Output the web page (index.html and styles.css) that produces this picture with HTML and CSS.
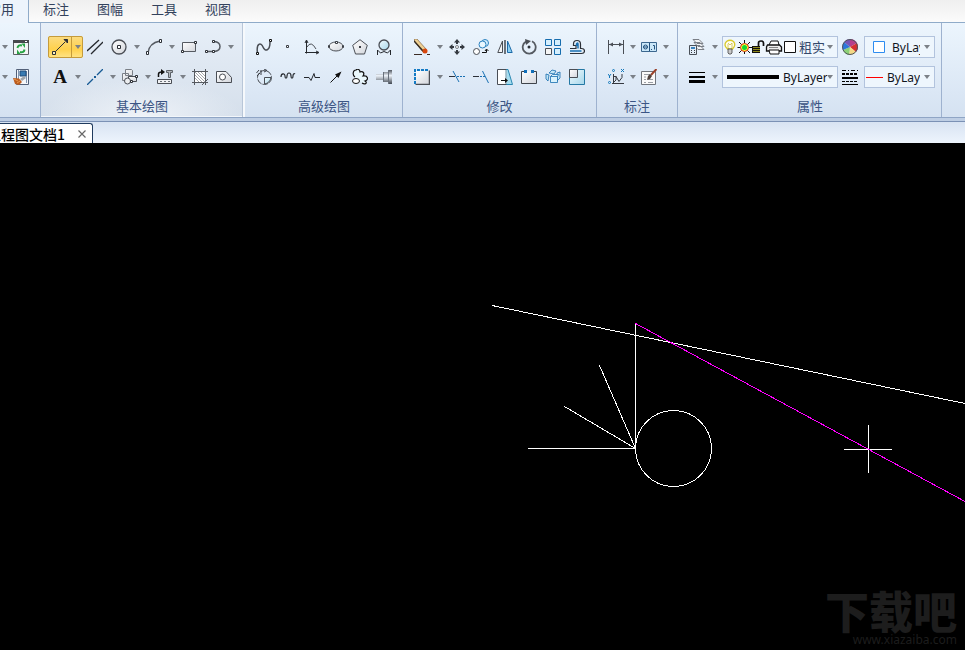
FILE: index.html
```html
<!DOCTYPE html>
<html lang="zh-CN">
<head>
<meta charset="utf-8">
<title>工程图文档1</title>
<link rel="stylesheet" href="styles.css">
</head>
<body>
<svg class="defs" aria-hidden="true">
  <defs>
    <symbol id="arrow" viewBox="0 0 6 4"><path d="M0 0h6L3 4z" fill="#7b8087"/></symbol>
    <linearGradient id="face" x1="0" y1="0" x2="1" y2="1"><stop offset="0" stop-color="#fff"/><stop offset="1" stop-color="#d3d6dc"/></linearGradient>
    <linearGradient id="ice" x1="0" y1="0" x2="1" y2="1"><stop offset="0" stop-color="#f4fcff"/><stop offset="1" stop-color="#a5d6ea"/></linearGradient>
    <linearGradient id="steel" x1="0" y1="0" x2="0" y2="1"><stop offset="0" stop-color="#50565f"/><stop offset=".4" stop-color="#edf3fa"/><stop offset="1" stop-color="#3f4650"/></linearGradient>
  </defs>
</svg>
<nav class="menu">
  <a class="menu-item active" href="#">常用</a>
  <a class="menu-item" href="#">标注</a>
  <a class="menu-item" href="#">图幅</a>
  <a class="menu-item" href="#">工具</a>
  <a class="menu-item" href="#">视图</a>
</nav>
<main class="ribbon">
  <section class="group">
    <div class="row">
      <button class="drop small" aria-label="更多"><svg><use href="#arrow"/></svg></button>
      <button class="tool" aria-label="刷新"><svg viewBox="0 0 16 16"><path d="M.5 1.500h15v14H.5z" fill="#f4f5f6" stroke="#5d6065"/><path d="M0 1h16v3H0z" fill="#47494d"/><path d="M12 2h2v1h-2z" fill="#fff"/><path d="M4.500 9Q5 5.500 9 6.500M11.500 10.500Q11 14 7 13" fill="none" stroke="#27a343" stroke-width="2"/><path d="M8.500 4.500h3.500v4.500zM4 10.500v4.500h3.500z" fill="#2aa347"/></svg></button>
    </div>
    <div class="row">
      <button class="drop small" aria-label="更多"><svg><use href="#arrow"/></svg></button>
      <button class="tool" aria-label="特性刷"><svg viewBox="0 0 16 16"><path d="M3.500.5h12v15h-12z" fill="#f5f7fa" stroke="#526078"/><path d="M5 1h1v13H5zM13 2h1v12h-1z" fill="#8195b1"/><path d="M7 2h6v5H7z" fill="#387bb2" stroke="#234d78"/><path d="M11 7L7 10l2 2 4-3z" fill="#9fa5ab"/><path d="M0 9l6 .5 3 3.500-3 3-4-1z" fill="#bd5d1e"/><path d="M1 10l4 2M4 14l3-2" stroke="#e89a50"/></svg></button>
    </div>
  </section>

  <section class="group lit">
    <div class="row">
      <span class="split">
        <button class="tool" aria-label="直线"><svg viewBox="0 0 16 16"><path d="M2 14L13 3" stroke="#2c3037"/><path d="M12 .5h3.500V4z" fill="#2c3037" stroke="#2c3037"/><path d="M.5 12.500h3v3h-3z" fill="#fff2b8" stroke="#2c3037"/></svg></button>
        <button class="drop" aria-label="直线选项"><svg><use href="#arrow"/></svg></button>
      </span>
      <button class="tool" aria-label="平行线"><svg viewBox="0 0 16 16"><path d="M0 12L12 1M4 15L16 3" stroke="#25282d" stroke-width="1.300"/></svg></button>
      <button class="tool" aria-label="圆"><svg viewBox="0 0 16 16"><circle cx="8" cy="8" r="7" fill="url(#face)" stroke="#4a4e55" stroke-width="1.300"/><path d="M6.500 6.500h3v3h-3z" fill="#fff" stroke="#2c3037"/></svg></button>
      <button class="drop" aria-label="圆选项"><svg><use href="#arrow"/></svg></button>
      <button class="tool" aria-label="圆弧"><svg viewBox="0 0 16 16"><path d="M2 14Q3 4 14 2" fill="none" stroke="#555a61" stroke-width="1.500"/><path d="M.5 12.500h2v3h-2zM13.500.5h2v3h-2z" fill="#fff" stroke="#2c3037"/></svg></button>
      <button class="drop" aria-label="圆弧选项"><svg><use href="#arrow"/></svg></button>
      <button class="tool" aria-label="矩形"><svg viewBox="0 0 16 16"><path d="M1.500 3.500h13v9h-13z" fill="url(#face)" stroke="#555a61"/><path d="M.5 11.500h2v2h-2zM13.500 2.500h2v2h-2z" fill="#fff" stroke="#2c3037"/></svg></button>
      <button class="tool" aria-label="多段线"><svg viewBox="0 0 16 16"><path d="M2 12.500h7q6-.5 6-5t-6-5" fill="none" stroke="#555a61" stroke-width="1.500"/><path d="M.5 11.500h2v2h-2zM7.500 11.500h2v2h-2zM7.500 1.500h2v2h-2z" fill="#fff" stroke="#2c3037"/></svg></button>
      <button class="drop" aria-label="多段线选项"><svg><use href="#arrow"/></svg></button>
    </div>
    <div class="row">
      <button class="tool letter" aria-label="文字">A</button>
      <button class="drop" aria-label="文字选项"><svg><use href="#arrow"/></svg></button>
      <button class="tool" aria-label="中心线"><svg viewBox="0 0 16 16"><path d="M0 16L6 10M10 6L16 0" stroke="#175a94" stroke-width="1.300"/><path d="M7 7h2v2H7z" fill="#175a94"/></svg></button>
      <button class="drop" aria-label="中心线选项"><svg><use href="#arrow"/></svg></button>
      <button class="tool" aria-label="块"><svg viewBox="0 0 16 16"><path d="M3.500.5h6l1 1v5h-7zM.5 4.500h6v7h-6z" fill="url(#face)" stroke="#7a7f86"/><path d="M6.500 7.500h8v5h-8z" fill="url(#face)" stroke="#4a4e55"/><circle cx="5.500" cy="12" r="3" fill="#eceef0" stroke="#4a4e55"/><path d="M13.500 6.500h2v2h-2zM8.500 11.500h2v2h-2z" fill="#fff" stroke="#2c3037"/></svg></button>
      <button class="drop" aria-label="块选项"><svg><use href="#arrow"/></svg></button>
      <button class="tool" aria-label="图库"><svg viewBox="0 0 16 16"><path d="M1.500 8V5Q1.500 3 5 3" fill="none" stroke="#111" stroke-width="1.500"/><path d="M4 0l4 3-4 3z" fill="#111"/><path d="M9.500 1.500h6v2h-2v5h-2v-5h-2z" fill="#b4b8bd" stroke="#5d6268"/><path d="M.5 10.500h14v4H.5z" fill="#f0f1f3" stroke="#4a4e55"/><path d="M3 12h2v1H3zM7 12h2v1H7zM11 12h2v1h-2z" fill="#6c7178"/></svg></button>
      <button class="drop" aria-label="图库选项"><svg><use href="#arrow"/></svg></button>
      <button class="tool" aria-label="剖面线"><svg viewBox="0 0 16 16"><path d="M3 3h10v10H3z" fill="#fff"/><path d="M3 3l10 10M3 6l7 7M3 9l4 4M6 3l7 7M9 3l4 4" stroke="#8b9097" stroke-width=".8"/><path d="M2.500 0v16M13.500 0v16M0 2.500h16M0 13.500h16M10 16l6-6" fill="none" stroke="#55595f"/></svg></button>
      <button class="tool" aria-label="填充"><svg viewBox="0 0 16 16"><path d="M.5 2.500H10l5.500 6v5H.5z" fill="url(#face)" stroke="#4a4e55"/><circle cx="6.500" cy="8" r="3" fill="#fff" stroke="#4a4e55"/></svg></button>
    </div>
    <h2 class="label">基本绘图</h2>
  </section>

  <section class="group">
    <div class="row">
      <button class="tool" aria-label="样条"><svg viewBox="0 0 16 16"><path d="M1.500 14C0 4 5 3 7 8s7 4 7-5" fill="none" stroke="#4a4e55" stroke-width="1.500"/><path d="M.5 13.500h2v2h-2zM13.500.5h2v2h-2z" fill="#fff" stroke="#111"/></svg></button>
      <button class="tool" aria-label="点"><svg viewBox="0 0 16 16"><path d="M6.500 6.500h2v2h-2z" fill="#fff" stroke="#3a3e45"/></svg></button>
      <button class="tool" aria-label="公式曲线"><svg viewBox="0 0 16 16"><path d="M2.500 2v12.500M1 13.500h13M1 4l1.500-3L4 4M12 12l3 1.500-3 1.500" fill="none" stroke="#25282d"/><path d="M3 8Q7 1 12 10" fill="none" stroke="#4a4e55"/></svg></button>
      <button class="tool" aria-label="椭圆"><svg viewBox="0 0 16 16"><ellipse cx="8" cy="7.500" rx="7" ry="4.500" fill="url(#face)" stroke="#4a4e55"/><path d="M7.500 2.500h2v2h-2z" fill="#fff" stroke="#3a3e45"/><path d="M.5 6.500h1v2h-1zM14.500 6.500h1v2h-1z" fill="#fff" stroke="#3a3e45"/></svg></button>
      <button class="tool" aria-label="正多边形"><svg viewBox="0 0 16 16"><path d="M8 .7l7.300 5.600L12.500 15h-9L.7 6.300z" fill="url(#face)" stroke="#4a4e55"/><path d="M7 7h2v2H7z" fill="#3a3e45"/></svg></button>
      <button class="tool" aria-label="局部放大"><svg viewBox="0 0 16 16"><circle cx="8" cy="6" r="5" fill="url(#ice)" stroke="#4a4e55" stroke-width="1.300"/><path d="M1.500 16v-5l3 3Q8 11 11.500 14l3-3v5" fill="none" stroke="#25282d"/></svg></button>
    </div>
    <div class="row">
      <button class="tool" aria-label="齿轮"><svg viewBox="0 0 16 16"><circle cx="8.500" cy="8.500" r="7" fill="none" stroke="#4a4e55" stroke-dasharray="6 1"/><path d="M8.500 8.500h6.500Q14 14 8.500 15z" fill="url(#ice)" stroke="#4a4e55"/><path d="M3 1L.5 4M5 1v5M1 7l3-3M8 0l3 1.500L8 3" fill="none" stroke="#3a3e45"/></svg></button>
      <button class="tool" aria-label="波浪线"><svg viewBox="0 0 16 16"><path d="M1 8C1 4 5 4 5 7c0 3 2 3 2 0 0-4 4-4 4 0 0 3 2 3 2 0 0-2 1-3 2-2" fill="none" stroke="#25282d" stroke-width="1.200"/></svg></button>
      <button class="tool" aria-label="双折线"><svg viewBox="0 0 16 16"><path d="M0 8.500h5l2 3 3-7 1 4h5" fill="none" stroke="#25282d"/></svg></button>
      <button class="tool" aria-label="箭头"><svg viewBox="0 0 16 16"><path d="M2.500 13.500L11 5" stroke="#111"/><path d="M13.500 2.500L10.500 9 7 5.500z" fill="#111"/></svg></button>
      <button class="tool" aria-label="云线"><svg viewBox="0 0 16 16"><path d="M3 8C0 6 1 1 4 1c2-2 4 0 4 2 3-1 5 1 3 4 5-1 6 4 2 5 3 2 0 4-3 2" fill="#eaf8fd" stroke="#111" stroke-width="1.200"/><ellipse cx="4" cy="12" rx="3.500" ry="2.500" fill="#fff" stroke="#111"/></svg></button>
      <button class="tool" aria-label="轴"><svg viewBox="0 0 16 16"><path d="M0 5h7v6H0zM7 3h5v10H7zM12 1h4v14h-4z" fill="url(#steel)"/><path d="M7.500 3v10M12.500 1v14" stroke="#69717c"/></svg></button>
    </div>
    <h2 class="label">高级绘图</h2>
  </section>

  <section class="group roomy">
    <div class="row">
      <button class="tool" aria-label="删除"><svg viewBox="0 0 16 16"><path d="M0 0h3l9 10-3 3L1 3z" fill="#efd092" stroke="#826748" stroke-width=".7"/><path d="M0 2l9 10" stroke="#332a22" stroke-width="1.500"/><circle cx="11" cy="12" r="2.500" fill="#d8470e"/><path d="M0 15.500h8M13 15.500h3" stroke="#3b2b24"/></svg></button>
      <button class="drop" aria-label="删除选项"><svg><use href="#arrow"/></svg></button>
      <button class="tool" aria-label="平移"><svg viewBox="0 0 16 16"><path d="M8 0l3 3.500H9V5H7V3.500H5zM8 16l3-3.500H9V11H7v1.500H5zM0 8l3.500-3v2H5v2H3.500v2zM16 8l-3.500-3v2H11v2h1.500v2z" fill="#343940"/><circle cx="8" cy="8" r="1.500" fill="#fff" stroke="#7b8087"/></svg></button>
      <button class="tool" aria-label="复制"><svg viewBox="0 0 16 16"><circle cx="12" cy="4" r="3.500" fill="#d5efff" stroke="#2c82bf"/><circle cx="9.500" cy="5.500" r="3.500" fill="#e9f7ff" stroke="#2c82bf"/><circle cx="3.500" cy="12.500" r="3" fill="#fff" stroke="#4a4e55"/><path d="M9 13.500h4.500v-3M12 12l1.500-2 2 2" fill="none" stroke="#111"/></svg></button>
      <button class="tool" aria-label="镜像"><svg viewBox="0 0 16 16"><path d="M5.500 2v11.500H.8z" fill="#f4f5f6" stroke="#4a4e55"/><path d="M10.500 2v11.500h4.700z" fill="#8ed1f3" stroke="#1c6aa8"/><path d="M8 1v14" stroke="#2c3037" stroke-width="1.300"/></svg></button>
      <button class="tool" aria-label="旋转"><svg viewBox="0 0 16 16"><path d="M11 2.300A6.500 6.500 0 1 1 5 2.500" fill="none" stroke="#555a61" stroke-width="1.800"/><path d="M4 0l6 2-5 4z" fill="#4a4e55"/><circle cx="8" cy="8" r="1.500" fill="#2c3037"/></svg></button>
      <button class="tool" aria-label="阵列"><svg viewBox="0 0 16 16"><path d="M.5.5h6v6h-6zM9.500.5h6v6h-6zM9.500 9.500h6v6h-6z" fill="#d6effd" stroke="#176dae"/><path d="M.5 9.500h6v6h-6z" fill="#f5f5f5" stroke="#4a4e55"/></svg></button>
      <button class="tool" aria-label="偏移"><svg viewBox="0 0 16 16"><path d="M1 14.500h11.500q3 0 3-2.500t-3-2.500h-1V5q0-3.500-3.500-3.500T4.500 5v1.500h2.500v3H1" fill="none" stroke="#2c3037" stroke-width="1.200"/><path d="M1 12h11.500M7.500 7V5q1.500-2 1.500 0v4.500" fill="none" stroke="#1970b3" stroke-width="1.500"/></svg></button>
    </div>
    <div class="row">
      <button class="tool" aria-label="拉伸"><svg viewBox="0 0 16 16"><path d="M2 2h13v13H2z" fill="url(#face)"/><path d="M1.500 15.500h14v-14" fill="none" stroke="#4a4e55" stroke-width="1.500"/><path d="M1 15V1h14" fill="none" stroke="#147bc5" stroke-width="2" stroke-dasharray="3 1"/></svg></button>
      <button class="drop" aria-label="拉伸选项"><svg><use href="#arrow"/></svg></button>
      <button class="tool" aria-label="裁剪"><svg viewBox="0 0 16 16"><path d="M0 7.500h6" stroke="#2c3037"/><path d="M8 7.500h8" stroke="#1970b3" stroke-dasharray="2 1"/><path d="M4 2l6 11" stroke="#1970b3"/></svg></button>
      <button class="tool" aria-label="延伸"><svg viewBox="0 0 16 16"><path d="M0 7.500h6" stroke="#2c3037"/><path d="M7 7.500h5" stroke="#1970b3" stroke-dasharray="2 1"/><path d="M9.500 2l6 12" stroke="#1970b3"/></svg></button>
      <button class="tool" aria-label="拉长"><svg viewBox="0 0 16 16"><path d="M8 .5h3l4.500 15H8z" fill="#a4dcef" stroke="#2b87b1"/><path d="M.5.500H9v15H.5z" fill="#fff" stroke="#4a4e55"/><path d="M9 1v14" stroke="#c1e5f5"/><path d="M4 11.500h5" stroke="#111"/><path d="M8 9l3 2.500L8 14z" fill="#111"/></svg></button>
      <button class="tool" aria-label="打断"><svg viewBox="0 0 16 16"><path d="M.5 2.500h15v12H.5z" fill="url(#face)" stroke="#3f444b"/><path d="M5 2h6v1H5z" fill="#eff3f7"/><path d="M3 1h3v3H3zM10 1h3v3h-3z" fill="#126fb8"/></svg></button>
      <button class="tool" aria-label="分解"><svg viewBox="0 0 16 16"><path d="M4 4l3-3 4 1-2 3zM1 5l3 1-1 6-2-2zM12 4l3-1v6l-3 3z" fill="#c1e5f5" stroke="#176dae" stroke-width=".8"/><path d="M5.500 7.500h7v6h-7zM5.500 7.500l2-2h6l-1 2" fill="#d9f2fc" stroke="#176dae" stroke-width=".8"/></svg></button>
      <button class="tool" aria-label="缩放"><svg viewBox="0 0 16 16"><path d="M.5.500h15v15H.5z" fill="url(#ice)" stroke="#2478a4"/><path d="M.5.500h8v8h-8z" fill="url(#face)" stroke="#4a4e55"/></svg></button>
    </div>
    <h2 class="label">修改</h2>
  </section>

  <section class="group roomy">
    <div class="row">
      <button class="tool" aria-label="尺寸标注"><svg viewBox="0 0 16 16"><path d="M.5 1v14M15.500 1v14M1 5.500h14" stroke="#4a4e55"/><path d="M1 5.500l4-2v4zM15 5.500l-4-2v4z" fill="#4a4e55"/></svg></button>
      <button class="drop small" aria-label="尺寸标注选项"><svg><use href="#arrow"/></svg></button>
      <button class="tool" aria-label="形位公差"><svg viewBox="0 0 16 16"><path d="M.5 3.500h15v9H.5z" fill="#cbe7f8" stroke="#3c678f"/><circle cx="4.500" cy="8" r="2" fill="none" stroke="#24527e"/><path d="M2 8h5M8.500 4v8M10 10.500h1M12 6.500h1.500v4" stroke="#24527e" fill="none"/></svg></button>
      <button class="drop small" aria-label="公差选项"><svg><use href="#arrow"/></svg></button>
    </div>
    <div class="row">
      <button class="tool" aria-label="坐标标注"><svg viewBox="0 0 16 16"><path d="M5.500 5v9.500M4 14.500h12M5 7.500h3l3 5 3-4V5M8 7v4l-3 3" fill="none" stroke="#353940"/><path d="M0 5l1.500 2L3 5M1.500 7v2M13 0l3 3M16 0l-3 3" fill="none" stroke="#1478bb"/><circle cx="5.500" cy="1.500" r="1" fill="none" stroke="#1478bb"/><circle cx="1.500" cy="13.500" r="1" fill="none" stroke="#1478bb"/></svg></button>
      <button class="drop small" aria-label="坐标标注选项"><svg><use href="#arrow"/></svg></button>
      <button class="tool" aria-label="标注编辑"><svg viewBox="0 0 16 16"><path d="M.5 2.500h14v13H.5z" fill="#fafafa" stroke="#70757c"/><path d="M3 5.500h6M3 10.500h2M3 13.500h2M7 10.500h5M7 13.500h5M3 8h2" stroke="#9a9ea4"/><path d="M15.500 0L10 6" stroke="#9a412a" stroke-width="2"/><path d="M9 5l2 2-2 3-3 1 1-4z" fill="#51433e"/></svg></button>
      <button class="drop small" aria-label="标注编辑选项"><svg><use href="#arrow"/></svg></button>
    </div>
    <h2 class="label">标注</h2>
  </section>

  <section class="group">
    <div class="row">
      <button class="tool" aria-label="图层"><svg viewBox="0 0 16 16"><path d="M4 .5h6l4 4H8zM5 3.500h6l4 4H9zM5 6.500h6l4 4H9z" fill="#f3f5f7" stroke="#7a7f86"/><path d="M.5 6.500h7v9h-7z" fill="#e3edf7" stroke="#4a5058"/><path d="M2 8h4v2H2z" fill="#3b83bd"/><path d="M2 11.500h1M5 11.500h1M2 13.500h1M5 13.500h1" stroke="#34383f"/></svg></button>
      <button class="drop" aria-label="图层选项"><svg><use href="#arrow"/></svg></button>
      <label class="combo wide">
        <svg class="layer-state" viewBox="0 0 74 18" aria-hidden="true">
          <path d="M4.500 11Q0 7 3.500 3.500q3.500-2.500 7 0 3 3.500-1 7.500z" fill="#fffdf0" stroke="#d8ca29" stroke-width="1.300"/><path d="M5 5l2 2 2-2v6M5 6v5" fill="none" stroke="#c6b727" stroke-width=".7"/><path d="M5 11h4v4l-1 1H6l-1-1z" fill="#c9c9c9" stroke="#444" stroke-width=".8"/>
          <path d="M21.500 2v3M21.500 13v3M14.500 9.500h3M26 9.500h3M16 4l3 3M24 12l3 3M27 4l-3 3M19 12l-3 3" stroke="#111"/><circle cx="21.500" cy="9.500" r="4" fill="#ffff32" stroke="#d22b17"/><circle cx="21.500" cy="9.500" r="2.500" fill="#15d737"/>
          <path d="M29 8h8v7h-8z" fill="#111"/><path d="M30 9.500h7M30 11.500h7M30 13.500h7" stroke="#8f891b"/><path d="M35.500 8V5q0-2 2.500-2t2.500 2v3" fill="none" stroke="#111" stroke-width="1.700"/>
          <path d="M46 7l2-4h7l1 4" fill="#fff" stroke="#111"/><path d="M44.500 7h12l2 2v4h-15V9z" fill="#eee" stroke="#111" stroke-width="1.300"/><path d="M46 12h10v4H47z" fill="#fff" stroke="#111"/><path d="M46 9.500h9" stroke="#888"/>
          <path d="M61.500 3.500h11v11h-11z" fill="#fff" stroke="#111"/>
        </svg>
        <select class="cjk" aria-label="当前图层"><option>粗实</option></select>
        <svg class="mark"><use href="#arrow"/></svg>
      </label>
      <button class="tool" aria-label="颜色"><svg viewBox="0 0 16 16"><path d="M8 8V0a8 8 0 0 1 7 4z" fill="#b63f8c"/><path d="M8 8l7-4a8 8 0 0 1-1 9z" fill="#d63030"/><path d="M8 8l6 5a8 8 0 0 1-7 3z" fill="#f4d985"/><path d="M8 8l-1 8a8 8 0 0 1-6-5z" fill="#8cd176"/><path d="M8 8l-7 3a8 8 0 0 1 1-8z" fill="#2b78da"/><path d="M8 8L2 3a8 8 0 0 1 6-3z" fill="#7756b6"/><circle cx="8" cy="8" r="7.500" fill="none" stroke="#50555c"/></svg></button>
      <label class="combo color">
        <svg class="swatch" viewBox="0 0 12 12" aria-hidden="true"><path d="M.5.500h11v11H.5z" fill="#fff" stroke="#2d8cf0"/></svg>
        <select aria-label="当前颜色"><option>ByLayer</option></select>
        <svg class="mark"><use href="#arrow"/></svg>
      </label>
    </div>
    <div class="row">
      <button class="tool" aria-label="线宽"><svg viewBox="0 0 16 16"><path d="M0 3h16v1H0zM0 7h16v2H0zM0 11h16v3H0z" fill="#000"/></svg></button>
      <button class="drop" aria-label="线宽选项"><svg><use href="#arrow"/></svg></button>
      <label class="combo wide">
        <svg class="weight" viewBox="0 0 52 4" aria-hidden="true"><path d="M0 0h52v4H0z" fill="#000"/></svg>
        <select aria-label="当前线宽"><option>ByLayer</option></select>
        <svg class="mark"><use href="#arrow"/></svg>
      </label>
      <button class="tool" aria-label="线型"><svg viewBox="0 0 16 16" shape-rendering="crispEdges"><path d="M0 1.500h16" stroke="#000" stroke-dasharray="4 2 1 2"/><path d="M0 5h16" stroke="#000" stroke-width="2" stroke-dasharray="3 1"/><path d="M0 8h16v2H0zM0 15h16v1H0z"/><path d="M0 12.500h16" stroke="#000" stroke-dasharray="3 1"/></svg></button>
      <label class="combo type">
        <svg class="line" viewBox="0 0 17 1" aria-hidden="true"><path d="M0 0h17v1H0z" fill="#f00"/></svg>
        <select aria-label="当前线型"><option>ByLayer</option></select>
        <svg class="mark"><use href="#arrow"/></svg>
      </label>
    </div>
    <h2 class="label">属性</h2>
  </section>
</main>
<div class="documents">
  <div class="document-tab">
    <span class="document-name">工程图文档1</span>
    <button class="close" aria-label="关闭"><svg viewBox="0 0 8 8"><path d="M.5.500l7 7M7.500.500l-7 7" stroke="#686868" stroke-width="1.200"/></svg></button>
  </div>
</div>
<section class="canvas">
  <svg class="drawing" aria-label="绘图区">
    <path d="M492 162.500L965 260.500M635.500 180v126M528 305.500h108M599.500 222.500L635.500 305.500M564.500 263.500L635.500 305.500" stroke="#fff"/>
    <circle cx="673.500" cy="305.500" r="38" fill="none" stroke="#fff"/>
    <path d="M868.500 282v48M844 306.500h48" stroke="#fff"/>
    <path d="M635.500 180.500L965 358.500" stroke="#f0f"/>
  </svg>
  <div class="watermark">
    <strong>下载吧</strong>
    <span>www.xiazaiba.com</span>
  </div>
</section>
</body>
</html>
```
FILE: styles.css
```css
* { box-sizing: border-box; }

body {
  margin: 0;
  min-height: 100vh;
  display: flex;
  flex-direction: column;
  overflow-x: hidden;
  background: #000;
  font: 13px "Noto Sans", "Noto Sans CJK SC", sans-serif;
}

svg { display: block; flex: none; }
.defs { width: 0; height: 0; position: absolute; }

button {
  flex: none;
  padding: 0;
  border: 0;
  background: none;
  display: flex;
  align-items: center;
  justify-content: center;
}

.menu {
  display: flex;
  height: 23px;
  padding-left: 27px;
  border-bottom: 1px solid #8fabc9;
  background: linear-gradient(#efefef, #fbfbfb);
}
.menu-item {
  flex: none;
  padding: 0 14px;
  color: #33425c;
  line-height: 18px;
  font-family: "Noto Sans CJK SC", sans-serif;
  text-decoration: none;
}
.menu-item.active {
  height: 23px;
  margin-left: -53px;
  border-right: 1px solid #8fabc9;
  background: #edf4fc;
}

.ribbon {
  display: flex;
  height: 99px;
  border-bottom: 1px solid #7b91b5;
  background: linear-gradient(#ecf5fd, #dbe7f5 70%, #d5e2f1 94px, #8fa5c5 94px, #8fa5c5 95px, #becee4 95px);
}
.group {
  flex: none;
  display: flex;
  flex-direction: column;
  height: 94px;
  padding: 9px 6px 0 7px;
  border-right: 1px solid #9eb2cf;
}
.group:first-child { padding: 9px 7px 0 0; }
.group.roomy { padding-right: 7px; }
.group.lit {
  padding-right: 7px;
  border-right: 2px solid #f6f9fc;
  box-shadow: inset -1px 0 #b8c6d8, inset 0 -1px #f2f6fa;
  background: radial-gradient(ellipse 50% 40% at 50% 100%, #eff3f8, #dbe3ed00), linear-gradient(#e7eff8, #d5dfeb);
}
.row { flex: none; display: flex; height: 30px; align-items: center; }
.tool { width: 24px; height: 24px; }
.tool svg { width: 16px; height: 16px; }
.drop { width: 11px; height: 22px; padding-left: 1px; }
.drop.small { width: 9px; }
.drop svg, .mark { width: 6px; height: 4px; }
.letter { color: #111; font: bold 19px "Liberation Serif", serif; }
.split {
  display: flex;
  height: 22px;
  border-radius: 2px;
  outline: 1px solid #c59b3b;
  outline-offset: -1px;
  background: linear-gradient(#fbdc84, #ffd14c 60%, #ffe58a);
}
.split .tool { height: 22px; border-right: 1px solid #c59b3b; }
.label {
  margin: 0;
  color: #3b5584;
  font: 13px/28px "Noto Sans CJK SC", sans-serif;
  text-align: center;
}

.combo {
  display: flex;
  align-items: center;
  height: 22px;
  padding-right: 4px;
  border: 1px solid #b2c3dd;
  background: #eef6fd;
}
.combo.wide { width: 116px; margin-left: 2px; }
.combo.color, .combo.type { width: 71px; margin-left: 2px; }
.combo select {
  flex: 1;
  width: 0;
  min-width: 0;
  height: 18px;
  margin: 0 4px;
  padding: 0;
  overflow: hidden;
  appearance: none;
  border: 0;
  background: none;
  color: #10151d;
  font: 12px "Noto Sans", sans-serif;
  text-overflow: clip;
}
.combo.wide select { margin-right: 0; }
.combo .cjk { margin-left: 2px; color: #33486b; font: 13px/18px "Noto Sans CJK SC", sans-serif; }
.layer-state { width: 74px; height: 18px; }
.swatch { width: 12px; height: 12px; margin: 0 3px 0 8px; }
.weight { width: 52px; height: 4px; margin-left: 4px; }
.line { width: 17px; height: 1px; margin-left: 1px; }

.documents { display: flex; height: 21px; background: linear-gradient(#d8e3f2, #edf4fd); }
.document-tab {
  display: flex;
  align-items: center;
  height: 20px;
  margin: 1px 0 0 -14px;
  padding-right: 5px;
  border: 1px solid #203b5e;
  border-bottom: 0;
  border-radius: 0 3px 0 0;
  background: #fff;
}
.document-name { color: #000; font: 500 14px/18px "Noto Sans CJK SC", sans-serif; }
.close { width: 10px; height: 12px; margin-left: 12px; }
.close svg { width: 8px; height: 8px; }

.canvas { position: relative; flex: 1; display: flex; overflow: hidden; background: #000; }
.drawing { flex: 1; min-width: 0; height: auto; min-height: 400px; shape-rendering: crispEdges; }
.watermark {
  position: absolute;
  right: 8px;
  bottom: 3px;
  display: flex;
  flex-direction: column;
  align-items: flex-end;
  color: #1d1d1d;
}
.watermark strong { font: 900 44px/46px "Noto Sans CJK SC", sans-serif; }
.watermark span { font: 12px/14px "Noto Sans", sans-serif; }
```
